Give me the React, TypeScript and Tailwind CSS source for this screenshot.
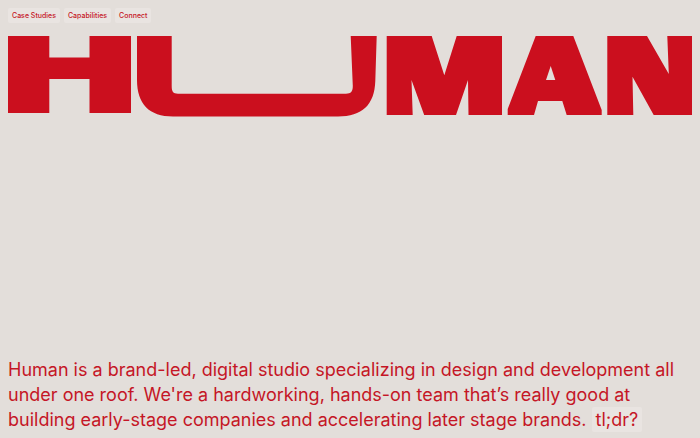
const links = ["Case Studies", "Capabilities", "Connect"];

function Wordmark() {
  return (
    <svg viewBox="0 0 684 81" className="block w-full fill-[#cb0f1e]" role="img" aria-label="Human">
      <path d="M0 0H41.3V21.5H81.5V0H123V77H81.5V43H41.3V77H0Z" />
      <path d="M129 0H163.7V50C163.7 55.5 165 57.7 170 57.7H338C343 57.7 344.8 55.5 344.8 50L342.7 0H368.7L367.3 45C366.5 69 354 80.5 330 80.5H165C141 80.5 129 68 129 44Z" />
      <path d="M378.7 0H423.7L436.3 39.3L448.7 0H494V79H460.5L460 44L448 79H416.2L403.5 44L404.7 79H378.7Z" />
      <path
        fillRule="evenodd"
        d="M527.7 0H565.3L593.7 74V79H558.7L554.3 65H530L526 79H499.7V73ZM542.7 30L538 44H547.3Z"
      />
      <path d="M599.3 0H639L660.8 38L659.3 0H684V79H645.7L624.5 40.7L625.3 79H599.3Z" />
    </svg>
  );
}

export default function App() {
  return (
    <div className="flex min-h-screen flex-col bg-[#e3deda] px-2 pt-2 pb-1.5 font-['Inter','Liberation_Sans',sans-serif] text-[#c51626]">
      <nav className="flex gap-1">
        {links.map((label) => (
          <a
            key={label}
            href={"#" + label.toLowerCase().replace(" ", "-")}
            className="rounded-xs bg-[#e9e4e1] px-1 text-[7px] leading-[15px] font-medium"
          >
            {label}
          </a>
        ))}
      </nav>
      <h1 className="mt-[13px]">
        <Wordmark />
      </h1>
      <p className="mt-auto text-[18px] leading-[25px]">
        Human is a brand-led, digital studio specializing in design and development all
        <br />
        under one roof. We're a hardworking, hands-on team that’s really good at
        <br />
        building early-stage companies and accelerating later stage brands.{" "}
        <button type="button" className="rounded-xs bg-[#e9e4e1] px-1">
          tl;dr?
        </button>
      </p>
    </div>
  );
}
